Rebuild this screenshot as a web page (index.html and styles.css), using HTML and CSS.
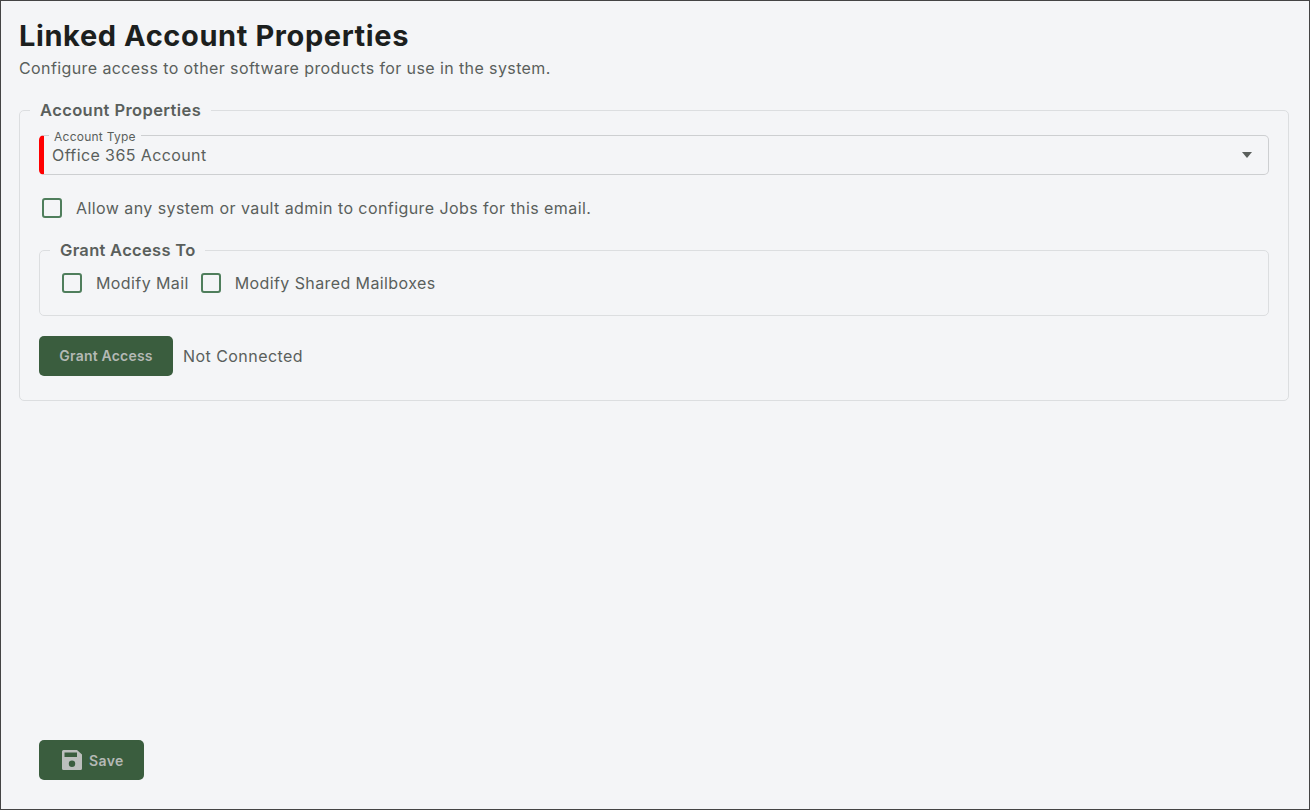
FILE: index.html
```html
<!DOCTYPE html>
<html lang="en">
<head>
    <meta charset="UTF-8">
    <title>Linked Account Properties</title>
    <link rel="stylesheet" href="styles.css">
</head>
<body>
    <div class="page">
        <h1 class="title">Linked Account Properties</h1>
        <p class="subtitle">Configure access to other software products for use in the system.</p>

        <fieldset class="group">
            <legend class="group-title">Account Properties</legend>

            <div class="select">
                <span class="select-label">Account Type</span>
                <span class="select-value">Office 365 Account</span>
                <span class="select-arrow"></span>
            </div>

            <label class="check check-admin">
                <span class="box"></span>
                Allow any system or vault admin to configure Jobs for this email.
            </label>

            <fieldset class="group group-inner">
                <legend class="group-title">Grant Access To</legend>
                <div class="check-row">
                    <label class="check"><span class="box"></span>Modify Mail</label>
                    <label class="check"><span class="box"></span>Modify Shared Mailboxes</label>
                </div>
            </fieldset>

            <div class="connect-row">
                <button class="btn">Grant Access</button>
                <span class="status">Not Connected</span>
            </div>
        </fieldset>

        <div class="footer">
            <button class="btn btn-save">
                <svg class="save-icon" viewBox="0 0 20 20" width="20" height="20">
                    <path fill-rule="evenodd" d="M1.5 0H15l5 4.500V18.500a1.500 1.500 0 0 1-1.500 1.500H1.500A1.500 1.500 0 0 1 0 18.500V1.500A1.500 1.500 0 0 1 1.500 0ZM2.500 2.500V7H15V2.500ZM10 10.500a3.200 3.200 0 1 0 0 6.400 3.200 3.200 0 0 0 0-6.400Z"/>
                </svg>
                Save
            </button>
        </div>
    </div>
</body>
</html>
```

FILE: styles.css
```css
* {
    box-sizing: border-box;
}
body {
    margin: 0;
    font-family: Inter, "Liberation Sans", sans-serif;
    color: #5a5f5c;
    letter-spacing: 0.4px;
}
.page {
    width: 1310px;
    height: 810px;
    padding: 18px 20px 29px 18px;
    background-color: #f4f5f7;
    border: 1px solid #444;
    display: flex;
    flex-direction: column;
}
.title {
    margin: 0;
    font-size: 29px;
    line-height: 34px;
    font-weight: 700;
    letter-spacing: 0.6px;
    color: #1c1f1e;
}
.subtitle {
    margin: 4px 0 0;
    font-size: 16px;
    line-height: 22px;
}
.group {
    margin: 21px 0 0;
    padding: 15px 19px 24px;
    border: 1px solid #dcdee0;
    border-radius: 5px;
    min-width: 0;
}
.group-title {
    margin-left: -9px;
    padding: 0 10px;
    font-size: 16.500px;
    line-height: 20px;
    font-weight: 600;
}
.select {
    position: relative;
    height: 40px;
    padding: 8px 12px 0;
    border: 1px solid #cdcfd1;
    border-left: 5px solid #f00;
    border-radius: 5px;
    font-size: 16px;
    line-height: 22px;
}
.select-label {
    position: absolute;
    top: -6px;
    left: 5px;
    padding: 0 5px;
    font-size: 12px;
    line-height: 13px;
    letter-spacing: 0.25px;
    background-color: #f4f5f7;
}
.select-value {
    margin-left: -4px;
}
.select-arrow {
    position: absolute;
    top: 16px;
    right: 16px;
    border-left: 5.500px solid transparent;
    border-right: 5.500px solid transparent;
    border-top: 6px solid #5a5f5c;
}
.check {
    display: flex;
    align-items: center;
    font-size: 16px;
    line-height: 22px;
}
.check-admin {
    margin: 22px 0 0 3px;
    letter-spacing: 0.43px;
}
.box {
    width: 20px;
    height: 20px;
    margin-right: 14px;
    border: 2px solid #4f7e5c;
    border-radius: 3px;
}
.check-row {
    display: flex;
    gap: 12px;
    padding-left: 3px;
}
.group-inner {
    margin-top: 21px;
    padding: 12px 19px 21px;
}
.group-inner .group-title {
    letter-spacing: 0.3px;
}
.connect-row {
    display: flex;
    align-items: center;
    gap: 10px;
    margin-top: 20px;
}
.btn {
    height: 40px;
    padding: 0 20px 2px 20px;
    min-width: 134px;
    border: none;
    border-radius: 5px;
    background-color: #3a5d3e;
    color: #b4b9b5;
    font-family: inherit;
    font-size: 14px;
    font-weight: 600;
    letter-spacing: 0.2px;
}
.status {
    font-size: 16px;
    letter-spacing: 0.45px;
}
.footer {
    margin-top: auto;
    padding-left: 20px;
}
.btn-save {
    display: flex;
    align-items: center;
    gap: 7px;
    min-width: 0;
    padding: 0 20px 0 23px;
    letter-spacing: 0.4px;
}
.save-icon {
    fill: #bcbfbd;
}
```
